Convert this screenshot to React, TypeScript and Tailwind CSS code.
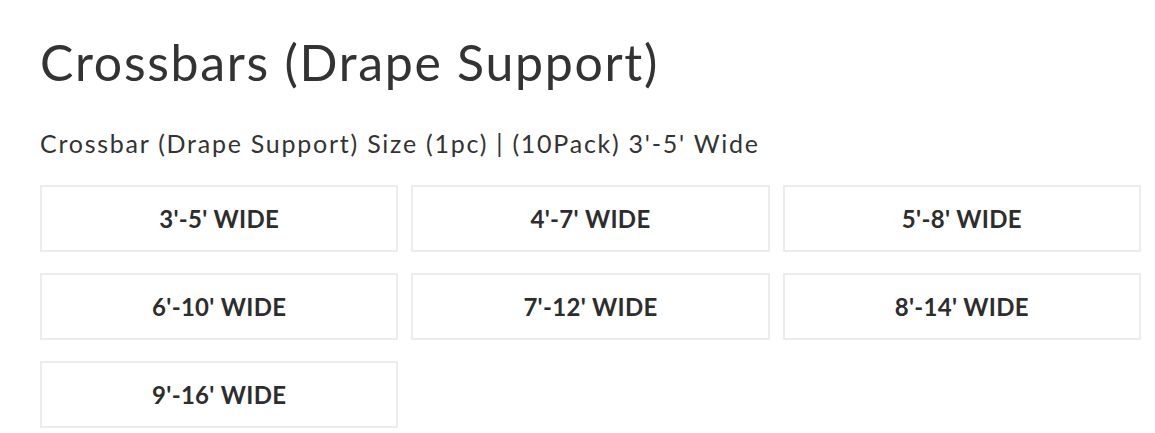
const sizes = [
  "3'-5' WIDE",
  "4'-7' WIDE",
  "5'-8' WIDE",
  "6'-10' WIDE",
  "7'-12' WIDE",
  "8'-14' WIDE",
  "9'-16' WIDE",
];

export default function App() {
  return (
    <div className="min-h-screen bg-white px-[40px] pt-[30px] font-['Lato',sans-serif] text-[#333]">
      <h1 className="text-[50px] leading-[64px] font-normal tracking-[1.7px]">
        Crossbars (Drape Support)
      </h1>
      <p className="mt-[32px] text-[25px] leading-[34px] tracking-[1.75px]">
        Crossbar (Drape Support) Size (1pc) | (10Pack) 3'-5' Wide
      </p>
      <div className="mt-[25px] grid w-[1101px] grid-cols-3 gap-x-[13px] gap-y-[21px]">
        {sizes.map((s) => (
          <button
            key={s}
            className="flex h-[67px] items-center justify-center border-2 border-[#ececec] bg-white text-[24px] font-bold tracking-[0.3px] text-[#2d2d2d]"
          >
            {s}
          </button>
        ))}
      </div>
    </div>
  );
}
